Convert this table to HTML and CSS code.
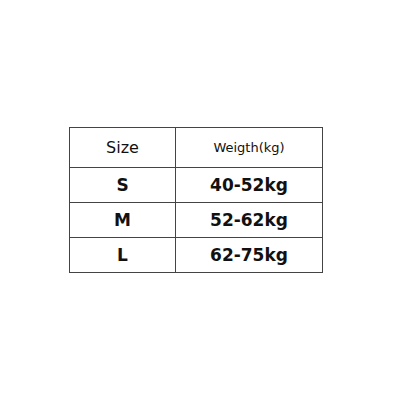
FILE: index.html
```html
<!DOCTYPE html>
<html>
<head>
<meta charset="utf-8">
<link rel="stylesheet" href="styles.css">
</head>
<body>
<div class="page">
  <div class="size-table">
    <div class="cell head">Size</div>
    <div class="cell head small">Weigth(kg)</div>
    <div class="cell">S</div>
    <div class="cell">40-52kg</div>
    <div class="cell">M</div>
    <div class="cell">52-62kg</div>
    <div class="cell">L</div>
    <div class="cell">62-75kg</div>
  </div>
</div>
</body>
</html>
```
FILE: styles.css
```css
html, body {
  margin: 0;
  background: #ffffff;
}
.page {
  width: 400px;
  height: 400px;
  box-sizing: border-box;
  padding: 127px 0 0 69px;
}
.size-table {
  display: grid;
  grid-template-columns: 106px 147px;
  grid-template-rows: 40px 35px 35px 35px;
  width: max-content;
  border-top: 1px solid #444;
  border-left: 1px solid #444;
  font-family: "DejaVu Sans", sans-serif;
  color: #111;
}
.cell {
  box-sizing: border-box;
  border-right: 1px solid #444;
  border-bottom: 1px solid #444;
  display: flex;
  align-items: center;
  justify-content: center;
  font-weight: bold;
  font-size: 17px;
}
.head {
  font-weight: normal;
  font-size: 16px;
}
.head.small {
  font-size: 13px;
}
```
